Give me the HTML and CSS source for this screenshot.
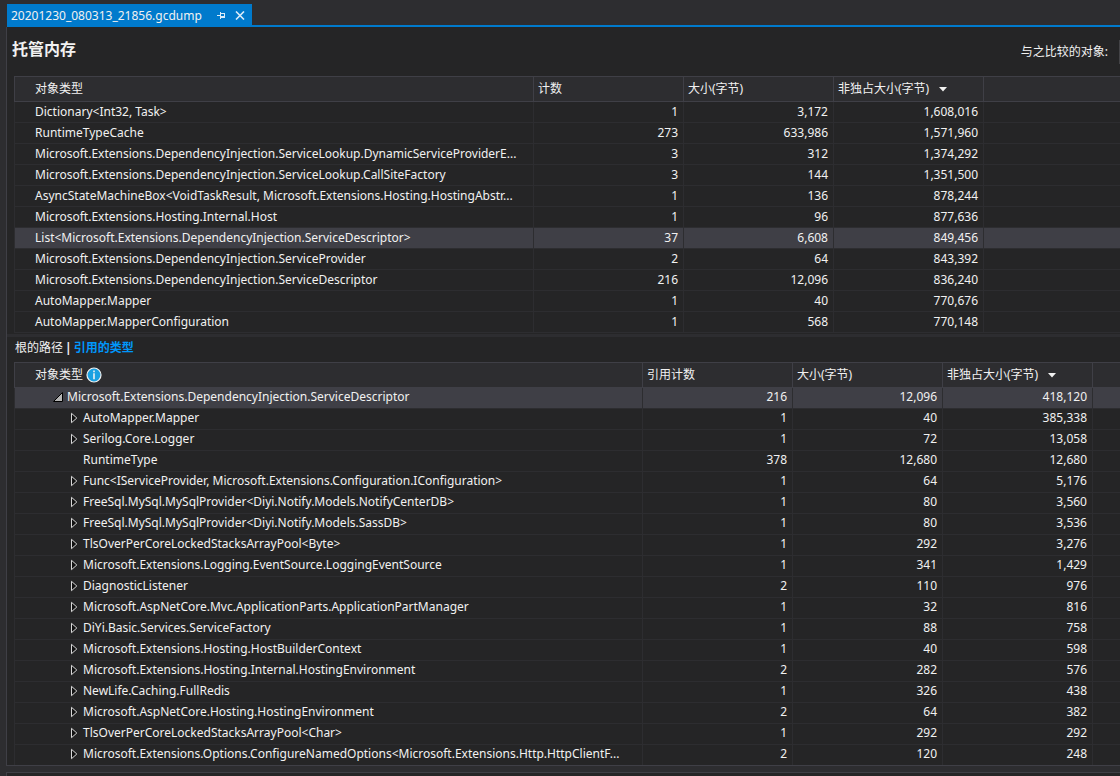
FILE: index.html
```
<!DOCTYPE html>
<html lang="zh-CN">
<head>
<meta charset="utf-8">
<title>20201230_080313_21856.gcdump</title>
<link rel="stylesheet" href="styles.css">
</head>
<body>
<nav class="doc-tabs">
  <div class="doc-tab">
    <span class="doc-name">20201230_080313_21856.gcdump</span>
    <button class="tab-button" type="button" aria-label="固定"><svg width="9" height="7" viewBox="0 0 9 7" shape-rendering="crispEdges"><path d="M0 3h3v1H0zM3 0h1v7H3zM4 1h4v1H4zM4 4h4v2H4zM7 1h1v5H7z"/></svg></button>
    <button class="tab-button" type="button" aria-label="关闭"><svg width="10" height="9" viewBox="0 0 10 9"><path d="M1 .5l8 8M9 .5l-8 8" fill="none" stroke="#d9ecf9" stroke-width="1.6"/></svg></button>
  </div>
</nav>
<main class="panel">
  <header class="panel-head">
    <h1 class="title">托管内存</h1>
    <label class="compare-label" for="compare">与之比较的对象:</label>
    <select class="compare" id="compare"></select>
  </header>
  <table class="grid">
    <colgroup><col class="col-type"><col class="col-num"><col class="col-num"><col class="col-num"><col></colgroup>
    <thead><tr><th>对象类型</th><th>计数</th><th>大小(字节)</th><th><button class="sort" type="button">非独占大小(字节)<svg width="8" height="5" viewBox="0 0 8 5"><path d="M0 0h8L4 4.500z"/></svg></button></th><th></th></tr></thead>
    <tbody>
      <tr><td>Dictionary&lt;Int32, Task&gt;</td><td>1</td><td>3,172</td><td>1,608,016</td><td></td></tr>
      <tr><td>RuntimeTypeCache</td><td>273</td><td>633,986</td><td>1,571,960</td><td></td></tr>
      <tr><td>Microsoft.Extensions.DependencyInjection.ServiceLookup.DynamicServiceProviderE...</td><td>3</td><td>312</td><td>1,374,292</td><td></td></tr>
      <tr><td>Microsoft.Extensions.DependencyInjection.ServiceLookup.CallSiteFactory</td><td>3</td><td>144</td><td>1,351,500</td><td></td></tr>
      <tr><td>AsyncStateMachineBox&lt;VoidTaskResult, Microsoft.Extensions.Hosting.HostingAbstr...</td><td>1</td><td>136</td><td>878,244</td><td></td></tr>
      <tr><td>Microsoft.Extensions.Hosting.Internal.Host</td><td>1</td><td>96</td><td>877,636</td><td></td></tr>
      <tr class="selected"><td>List&lt;Microsoft.Extensions.DependencyInjection.ServiceDescriptor&gt;</td><td>37</td><td>6,608</td><td>849,456</td><td></td></tr>
      <tr><td>Microsoft.Extensions.DependencyInjection.ServiceProvider</td><td>2</td><td>64</td><td>843,392</td><td></td></tr>
      <tr><td>Microsoft.Extensions.DependencyInjection.ServiceDescriptor</td><td>216</td><td>12,096</td><td>836,240</td><td></td></tr>
      <tr><td>AutoMapper.Mapper</td><td>1</td><td>40</td><td>770,676</td><td></td></tr>
      <tr><td>AutoMapper.MapperConfiguration</td><td>1</td><td>568</td><td>770,148</td><td></td></tr>
    </tbody>
  </table>
  <div class="splitter"></div>
  <nav class="views">
    <button class="view" type="button">根的路径</button>
    <span class="bar">|</span>
    <button class="view active" type="button">引用的类型</button>
  </nav>
  <table class="grid tree">
    <colgroup><col class="col-type"><col class="col-num"><col class="col-num"><col class="col-num"><col></colgroup>
    <thead><tr><th><span class="with-info">对象类型<svg width="16" height="16" viewBox="0 0 16 16"><circle cx="8" cy="8" r="7" fill="#1ba1e2" stroke="#f1f1f1" stroke-width="1.200"/><path d="M7.200 3.500h1.600v1.700H7.200zM7.200 6.300h1.600v6H7.200z"/></svg></span></th><th>引用计数</th><th>大小(字节)</th><th><button class="sort" type="button">非独占大小(字节)<svg width="8" height="5" viewBox="0 0 8 5"><path d="M0 0h8L4 4.500z"/></svg></button></th><th></th></tr></thead>
    <tbody id="references"></tbody>
  </table>
</main>
<section class="next-panel"></section>
<script src="tree.js"></script>
</body>
</html>
```
FILE: styles.css
```
* { box-sizing: border-box; }
body {
  margin: 0;
  height: 100vh;
  overflow: hidden;
  padding: 4px 0 0 6px;
  background: #2d2d30;
  color: #f1f1f1;
  font: 12px/20px "Noto Sans", "Noto Sans CJK SC", sans-serif;
}
button {
  padding: 0;
  border: 0;
  background: none;
  color: inherit;
  font: inherit;
}
svg { display: block; fill: #f1f1f1; flex: none; }
.doc-tabs {
  display: flex;
  margin-left: 1px;
  border-bottom: 2px solid #007acc;
}
.doc-tab {
  display: flex;
  align-items: center;
  height: 21px;
  padding: 2px 7px 0 4px;
  background: #007acc;
  white-space: nowrap;
}
.doc-name { width: 206px; }
.tab-button { margin-right: 9px; }
.tab-button svg { fill: #d9ecf9; }
.tab-button:last-child { margin-right: 0; }
.panel {
  padding-left: 7px;
  border-left: 1px solid #3f3f46;
  border-bottom: 1px solid #3f3f46;
  background: #252526;
}
.panel-head {
  display: flex;
  align-items: center;
  height: 49px;
  margin-left: -7px;
  padding-left: 5px;
  overflow: hidden;
}
.title {
  flex: 1;
  margin: 0 0 6px;
  font-size: 16px;
  line-height: 24px;
  font-weight: 700;
}
.compare-label { margin-right: 11px; }
.compare {
  flex: none;
  width: 160px;
  height: 24px;
  margin-right: -159px;
  border: 1px solid #434346;
  background: #333337;
  color: inherit;
}
.grid {
  width: 100%;
  table-layout: fixed;
  border-collapse: separate;
  border-spacing: 0;
  white-space: nowrap;
}
.col-type { width: 520px; }
.tree .col-type { width: 629px; }
.col-num { width: 150px; }
th, td {
  overflow: hidden;
  padding: 0 5px 0 4px;
  border-right: 1px solid #2d2d30;
  border-bottom: 1px solid #2d2d30;
}
th {
  height: 26px;
  border-color: #3f3f46;
  border-top: 1px solid #3f3f46;
  background: #2d2d30;
  font-weight: 400;
  text-align: left;
}
td { height: 21px; text-align: right; }
.tree td { padding-bottom: 2px; line-height: 18px; }
.tree tr:last-child td { height: 20px; border-bottom: 0; }
th:first-child, td:first-child {
  padding-left: 20px;
  padding-right: 0;
  border-left: 1px solid #2d2d30;
  text-align: left;
}
th:first-child { border-left-color: #3f3f46; }
th:last-child, td:last-child { border-right: 0; }
.selected td { background: #3f3f46; }
.sort, .with-info { display: flex; align-items: center; }
.sort { gap: 10px; }
.with-info { gap: 3px; }
.splitter {
  height: 3px;
  margin: 1px 0 0 -7px;
  background: #2d2d30;
}
.views {
  display: flex;
  gap: 2px;
  height: 25px;
  padding: 1px 0 0 1px;
}
.view { height: 20px; }
.bar { font-weight: 700; }
.active { color: #0097fb; font-weight: 700; }
.node { display: flex; align-items: center; padding-left: 35px; }
.root { padding-left: 18px; }
.toggle { flex: none; width: 13px; }
.root .toggle { width: 14px; }
.next-panel {
  height: 20px;
  margin-top: 6px;
  border: 1px solid #3f3f46;
  border-right: 0;
  background: #252526;
}
```
FILE: tree.js
```
const rows = [
  ["Microsoft.Extensions.DependencyInjection.ServiceDescriptor", "216", "12,096", "418,120", "open"],
  ["AutoMapper.Mapper", "1", "40", "385,338"],
  ["Serilog.Core.Logger", "1", "72", "13,058"],
  ["RuntimeType", "378", "12,680", "12,680", "leaf"],
  ["Func<IServiceProvider, Microsoft.Extensions.Configuration.IConfiguration>", "1", "64", "5,176"],
  ["FreeSql.MySql.MySqlProvider<Diyi.Notify.Models.NotifyCenterDB>", "1", "80", "3,560"],
  ["FreeSql.MySql.MySqlProvider<Diyi.Notify.Models.SassDB>", "1", "80", "3,536"],
  ["TlsOverPerCoreLockedStacksArrayPool<Byte>", "1", "292", "3,276"],
  ["Microsoft.Extensions.Logging.EventSource.LoggingEventSource", "1", "341", "1,429"],
  ["DiagnosticListener", "2", "110", "976"],
  ["Microsoft.AspNetCore.Mvc.ApplicationParts.ApplicationPartManager", "1", "32", "816"],
  ["DiYi.Basic.Services.ServiceFactory", "1", "88", "758"],
  ["Microsoft.Extensions.Hosting.HostBuilderContext", "1", "40", "598"],
  ["Microsoft.Extensions.Hosting.Internal.HostingEnvironment", "2", "282", "576"],
  ["NewLife.Caching.FullRedis", "1", "326", "438"],
  ["Microsoft.AspNetCore.Hosting.HostingEnvironment", "2", "64", "382"],
  ["TlsOverPerCoreLockedStacksArrayPool<Char>", "1", "292", "292"],
  ["Microsoft.Extensions.Options.ConfigureNamedOptions<Microsoft.Extensions.Http.HttpClientF...", "2", "120", "248"],
];
const closedIcon = '<svg width="8" height="12" viewBox="0 0 8 12"><path d="M1.500 1.300v9.400L6.800 6z" fill="#111" stroke="#d8d8d8"/></svg>';
const openIcon = '<svg width="10" height="10" viewBox="0 0 10 10"><path d="M9.500 .5v9H.5z" fill="#b4b4b4" stroke="#000"/></svg>';
const body = document.getElementById("references");

for (const [name, count, size, inclusive, kind] of rows) {
  const row = body.insertRow();
  const node = document.createElement("div");
  node.className = kind === "open" ? "node root" : "node";
  const toggle = document.createElement(kind === "leaf" ? "span" : "button");
  toggle.className = "toggle";
  if (kind !== "leaf") {
    toggle.type = "button";
    toggle.setAttribute("aria-label", kind === "open" ? "折叠" : "展开");
    toggle.innerHTML = kind === "open" ? openIcon : closedIcon;
  }
  const label = document.createElement("span");
  label.textContent = name;
  node.append(toggle, label);
  row.insertCell().append(node);
  for (const value of [count, size, inclusive, ""]) row.insertCell().textContent = value;
  if (kind === "open") row.className = "selected";
}
```
